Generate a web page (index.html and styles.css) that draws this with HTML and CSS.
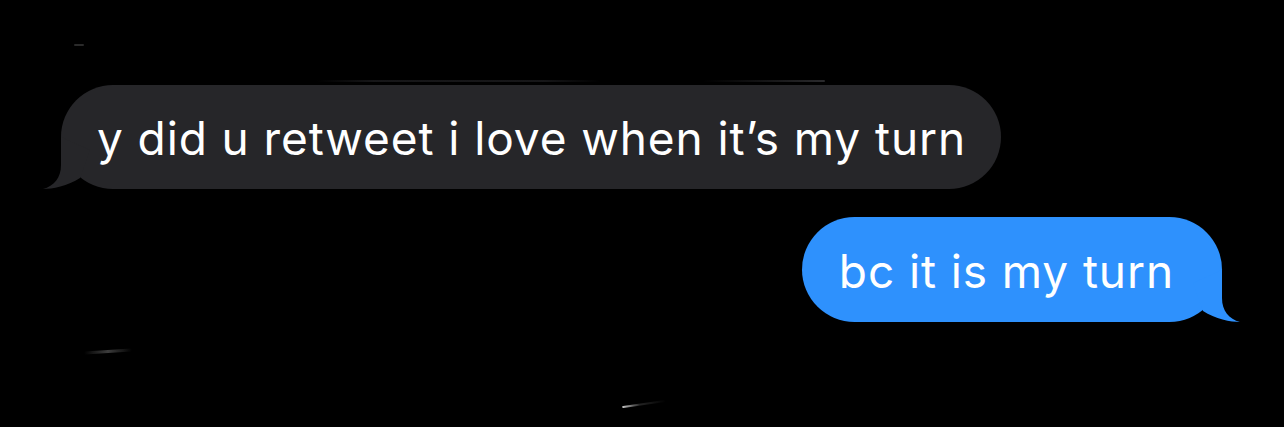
FILE: index.html
```html
<!DOCTYPE html>
<html lang="en">
<head>
<meta charset="utf-8">
<title>Messages</title>
<link rel="stylesheet" href="styles.css">
</head>
<body>
<main class="thread">
  <div class="row row-in">
    <div class="bubble bubble-in">
      <span class="text">y did u retweet i love when it’s my turn</span>
      <svg class="tail tail-in" width="60" height="54" viewBox="0 0 60 54" aria-hidden="true">
        <path d="M18 2 L18 30 C18 43 11 51 0 54 C9 54 25 51 37 43 L47 15 Z"/>
      </svg>
    </div>
  </div>
  <div class="row row-out">
    <div class="bubble bubble-out">
      <span class="text">bc it is my turn</span>
      <svg class="tail tail-out" width="60" height="54" viewBox="0 0 60 54" aria-hidden="true">
        <path d="M18 2 L18 30 C18 43 11 51 0 54 C9 54 25 51 37 43 L47 15 Z"/>
      </svg>
    </div>
  </div>
  <span class="smudge smudge-a"></span>
  <span class="smudge smudge-b"></span>
  <span class="smudge smudge-c"></span>
  <span class="smudge smudge-d"></span>
  <span class="smudge smudge-e"></span>
</main>
</body>
</html>
```

FILE: styles.css
```css
html, body {
  margin: 0;
  padding: 0;
  background: #000;
}
body {
  width: 1284px;
  height: 427px;
  overflow: hidden;
  font-family: Inter, "Noto Sans", "Liberation Sans", sans-serif;
}
.thread {
  position: relative;
  height: 427px;
  box-sizing: border-box;
  display: flex;
  flex-direction: column;
  gap: 28px;
  padding-top: 85px;
}
.row {
  display: flex;
}
.row-in {
  justify-content: flex-start;
  padding-left: 61px;
}
.row-out {
  justify-content: flex-end;
  padding-right: 62px;
}
.bubble {
  position: relative;
  display: flex;
  align-items: center;
  height: 104px;
  border-radius: 52px;
  box-sizing: border-box;
  color: #fff;
  font-size: 46px;
  letter-spacing: 0.9px;
}
.bubble-in {
  background: #262629;
  padding: 0 35px 0 36px;
  fill: #262629;
}
.bubble-out {
  background: #2e91fd;
  height: 105px;
  border-radius: 53px;
  padding: 0 48px 0 37px;
  fill: #2e91fd;
}
.text {
  white-space: nowrap;
  position: relative;
  top: 1px;
}
.tail {
  position: absolute;
  bottom: 0;
  display: block;
}
.tail-in {
  left: -18px;
}
.tail-out {
  right: -18px;
  transform: scaleX(-1);
}
.smudge {
  position: absolute;
  height: 2px;
  border-radius: 1px;
}
.smudge-a {
  left: 317px;
  top: 80px;
  width: 283px;
  background: linear-gradient(90deg, rgba(50,50,54,0), rgba(50,50,54,0.45) 20%, rgba(50,50,54,0.45) 80%, rgba(50,50,54,0));
}
.smudge-b {
  left: 703px;
  top: 80px;
  width: 122px;
  background: linear-gradient(90deg, rgba(60,60,64,0), rgba(70,70,74,0.6));
}
.smudge-c {
  left: 84px;
  top: 350px;
  width: 48px;
  height: 3px;
  transform: rotate(-4deg);
  background: linear-gradient(90deg, rgba(90,90,90,0), rgba(110,110,110,0.55) 50%, rgba(90,90,90,0));
}
.smudge-d {
  left: 622px;
  top: 403px;
  width: 44px;
  transform: rotate(-8deg);
  background: linear-gradient(90deg, rgba(220,220,220,0.9), rgba(120,120,120,0.3) 40%, rgba(90,90,90,0));
}
.smudge-e {
  left: 74px;
  top: 44px;
  width: 10px;
  background: rgba(70,70,70,0.6);
}
```
